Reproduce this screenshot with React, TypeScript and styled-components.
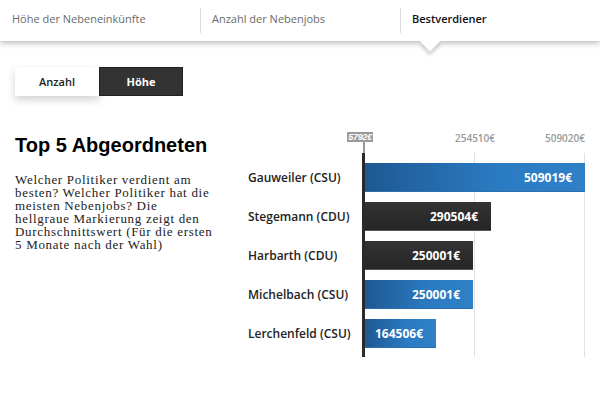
import React from 'react'
import styled, { createGlobalStyle } from 'styled-components'

const GlobalStyle = createGlobalStyle`
  html, body {
    margin: 0;
    padding: 0;
    background: #fff;
  }
  body {
    font-family: 'Open Sans', 'Liberation Sans', sans-serif;
  }
`

const Page = styled.div`
  width: 600px;
  height: 400px;
  overflow: hidden;
  background: #fff;
`

const Nav = styled.nav`
  position: relative;
  z-index: 2;
  display: flex;
  height: 41px;
  background: #fff;
  box-shadow: 0 2px 6px rgba(0, 0, 0, 0.28);
`

const Tab = styled.div<{ $active?: boolean; $first?: boolean }>`
  position: relative;
  flex: 1;
  display: flex;
  align-items: center;
  padding: 0 0 5px 12px;
  font-size: 11px;
  color: ${p => (p.$active ? '#111' : '#6a6a6a')};
  font-weight: ${p => (p.$active ? 600 : 400)};

  &::before {
    content: '';
    display: ${p => (p.$first ? 'none' : 'block')};
    position: absolute;
    left: 0;
    top: 8px;
    bottom: 8px;
    width: 1px;
    background: #ddd;
  }

  &::after {
    content: '';
    display: ${p => (p.$active ? 'block' : 'none')};
    position: absolute;
    left: 23px;
    bottom: -8px;
    width: 15px;
    height: 15px;
    background: #fff;
    transform: rotate(45deg) scaleX(0.9);
    box-shadow: 3px 3px 4px rgba(0, 0, 0, 0.18);
  }
`

const Toggle = styled.div`
  display: flex;
  margin: 26px 0 0 15px;
`

const ToggleButton = styled.div<{ $on?: boolean }>`
  width: 84px;
  height: 29px;
  box-sizing: border-box;
  display: flex;
  align-items: center;
  justify-content: center;
  font-size: 11px;
  font-weight: ${p => (p.$on ? 700 : 600)};
  color: ${p => (p.$on ? '#fff' : '#222')};
  background: ${p => (p.$on ? '#333' : '#fff')};
  border: 1px solid ${p => (p.$on ? '#222' : '#fff')};
  box-shadow: ${p => (p.$on ? 'none' : '0 4px 8px rgba(0, 0, 0, 0.18)')};
`

const Main = styled.div`
  display: flex;
  margin-top: 30px;
`

const Intro = styled.div`
  width: 248px;
  padding-left: 15px;
  box-sizing: border-box;
`

const Title = styled.h1`
  margin: 7px 0 0 0;
  font-family: 'Liberation Sans', Arial, sans-serif;
  font-size: 20px;
  font-weight: 700;
  line-height: 24px;
  color: #000;
`

const Text = styled.p`
  margin: 16px 0 0 0;
  font-family: 'Liberation Serif', serif;
  font-size: 13px;
  letter-spacing: 0.7px;
  line-height: 13px;
  white-space: nowrap;
  color: #222;
`

const Chart = styled.div`
  flex: 1;
`

const Axis = styled.div`
  position: relative;
  height: 27px;
  margin-left: 114px;
  font-size: 10px;
`

const AxisLabel = styled.span<{ $align: 'center' | 'right' }>`
  position: absolute;
  top: 5px;
  color: #999;
  font-weight: 600;
  transform: ${p => (p.$align === 'center' ? 'translateX(-50%)' : 'translateX(-100%)')};
`

const AvgLabel = styled.span`
  position: absolute;
  top: 6px;
  left: -15px;
  width: 26px;
  height: 10px;
  line-height: 10px;
  text-align: center;
  background: #9a9a9a;
  color: #fff;
  font-family: 'Liberation Sans', Arial, sans-serif;
  font-size: 9px;
  font-weight: 700;
  font-style: italic;
  letter-spacing: -0.3px;
  white-space: nowrap;

  &::after {
    content: '';
    position: absolute;
    left: 16px;
    top: 10px;
    width: 2px;
    height: 11px;
    background: #999;
  }
`

const Plot = styled.div`
  position: relative;
  display: flex;
  flex-direction: column;
  gap: 10px;
  padding: 10px 0 9px 0;
`

const Baseline = styled.div`
  position: absolute;
  left: 114px;
  top: 0;
  bottom: 0;
  width: 3px;
  background: #2a2a2a;
`

const GridLine = styled.div`
  position: absolute;
  top: 0;
  bottom: 0;
  width: 1px;
  background: #e2e2e2;
`

const Row = styled.div`
  position: relative;
  display: flex;
  align-items: center;
  height: 29px;
`

const Name = styled.div`
  width: 117px;
  font-size: 12px;
  font-weight: 600;
  color: #222;
`

const Bar = styled.div<{ $party: 'CSU' | 'CDU' }>`
  height: 29px;
  box-sizing: border-box;
  display: flex;
  align-items: center;
  justify-content: flex-end;
  padding-right: 13px;
  font-size: 12px;
  font-weight: 700;
  color: #fff;
  white-space: nowrap;
  background: ${p =>
    p.$party === 'CSU'
      ? 'linear-gradient(to right, #1d5892, #2b7bc2 60%, #2f80c6)'
      : 'linear-gradient(to bottom, #333, #262626)'};
  border-bottom: 1px solid ${p => (p.$party === 'CSU' ? '#2a6fae' : '#555')};
`

const MAX = 509020
const SCALE = 220

const rows: { name: string; party: 'CSU' | 'CDU'; value: number }[] = [
  { name: 'Gauweiler', party: 'CSU', value: 509019 },
  { name: 'Stegemann', party: 'CDU', value: 290504 },
  { name: 'Harbarth', party: 'CDU', value: 250001 },
  { name: 'Michelbach', party: 'CSU', value: 250001 },
  { name: 'Lerchenfeld', party: 'CSU', value: 164506 },
]

export default function App() {
  const px = (v: number) => Math.round((v / MAX) * SCALE)

  return (
    <Page>
      <GlobalStyle />
      <Nav>
        <Tab $first>Höhe der Nebeneinkünfte</Tab>
        <Tab>Anzahl der Nebenjobs</Tab>
        <Tab $active>Bestverdiener</Tab>
      </Nav>

      <Toggle>
        <ToggleButton>Anzahl</ToggleButton>
        <ToggleButton $on>Höhe</ToggleButton>
      </Toggle>

      <Main>
        <Intro>
          <Title>Top 5 Abgeordneten</Title>
          <Text>
            Welcher Politiker verdient am<br />
            besten? Welcher Politiker hat die<br />
            meisten Nebenjobs? Die<br />
            hellgraue Markierung zeigt den<br />
            Durchschnittswert (Für die ersten<br />
            5 Monate nach der Wahl)
          </Text>
        </Intro>

        <Chart>
          <Axis>
            <AvgLabel>5792€</AvgLabel>
            <AxisLabel $align="center" style={{ left: 113 }}>254510€</AxisLabel>
            <AxisLabel $align="right" style={{ left: 223 }}>509020€</AxisLabel>
          </Axis>
          <Plot>
            <GridLine style={{ left: 117 + SCALE / 2 - 1 }} />
            <GridLine style={{ left: 117 + SCALE - 1 }} />
            <Baseline />
            {rows.map(r => (
              <Row key={r.name}>
                <Name>{r.name} ({r.party})</Name>
                <Bar $party={r.party} style={{ width: px(r.value) }}>
                  {r.value}€
                </Bar>
              </Row>
            ))}
          </Plot>
        </Chart>
      </Main>
    </Page>
  )
}
